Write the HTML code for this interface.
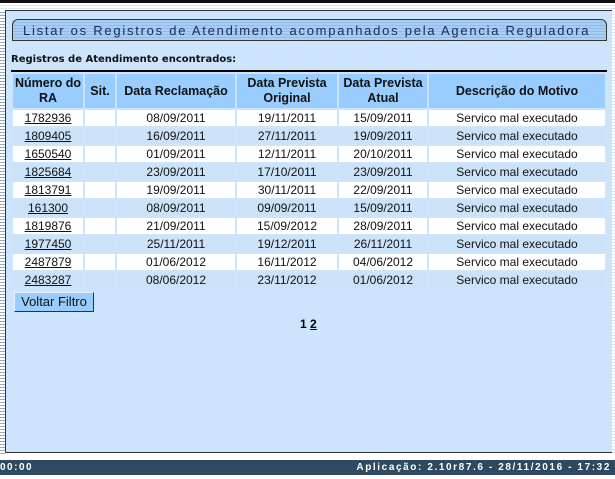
<!DOCTYPE html>
<html><head><style>
body{margin:0;width:615px;height:479px;overflow:hidden;background:#fff;font-family:"Liberation Sans",sans-serif;position:relative}
.topline{position:absolute;left:0;top:0;width:615px;height:3px;background:#111}
.stripes{position:absolute;left:0;top:3px;width:615px;height:452px;background:repeating-linear-gradient(#fff 0 2px,#dde8f3 2px 3px)}
.lstripe{position:absolute;left:0;top:10px;width:5px;height:445px;background:repeating-linear-gradient(#fff 0 2px,#9ab 2px 3px)}
.panel{position:absolute;left:5px;top:10px;width:606px;height:441px;background:#cce5fc;border:1px solid #333;border-right:none}
.title{position:absolute;left:12px;top:19px;width:595px;height:22px;border:1px solid #333;border-radius:6px 6px 0 0;background:repeating-linear-gradient(#a9cdf3 0 2px,#8fbbe8 2px 3px);font-size:13px;letter-spacing:1.75px;color:#1a2a55;line-height:22px;padding-left:10px;box-sizing:border-box;white-space:nowrap;overflow:hidden}
.sub{position:absolute;left:11px;top:54px;font-family:"DejaVu Sans",sans-serif;font-weight:bold;font-size:10px;color:#111}
table{position:absolute;left:11px;top:70px;width:596px;border-collapse:separate;border-spacing:2px;border-top:2px solid #000;background:#cce5fc;font-size:12px}
th{background:#99ccff;font-weight:bold;font-size:12.5px;color:#111;height:34px;line-height:15px;padding:0}
td{text-align:center;height:16px;padding:0;color:#111;line-height:16px}
tr.w td{background:#fff}tr.b td{background:#cce2f8}
td a{color:#111;text-decoration:underline}
.btn{position:absolute;left:14px;top:292px;width:78px;height:18px;background:#99ccff;border:1px solid #333;border-top-color:#eef;border-left-color:#eef;font-size:13px;text-align:center;line-height:18px;color:#111}
.pg{position:absolute;left:300px;top:317px;font-weight:bold;font-size:12px}
.foot{position:absolute;left:0;top:460px;width:615px;height:15px;background:#2f4a60;color:#fff;font-family:"Liberation Sans",sans-serif;font-weight:bold;font-size:10px;line-height:15px}
.foot span{position:absolute}
</style></head><body>
<div class="topline"></div><div class="stripes"></div><div class="lstripe"></div>
<div class="panel"></div>
<div class="title">Listar os Registros de Atendimento acompanhados pela Agencia Reguladora</div>
<div class="sub">Registros de Atendimento encontrados:</div>
<table>
<tr><th style="width:70px">Número do<br>RA</th><th style="width:30px">Sit.</th><th style="width:118px">Data Reclamação</th><th style="width:100px">Data Prevista<br>Original</th><th style="width:88px">Data Prevista<br>Atual</th><th>Descrição do Motivo</th></tr>
<tr class="w"><td><a>1782936</a></td><td></td><td>08/09/2011</td><td>19/11/2011</td><td>15/09/2011</td><td>Servico mal executado</td></tr>
<tr class="b"><td><a>1809405</a></td><td></td><td>16/09/2011</td><td>27/11/2011</td><td>19/09/2011</td><td>Servico mal executado</td></tr>
<tr class="w"><td><a>1650540</a></td><td></td><td>01/09/2011</td><td>12/11/2011</td><td>20/10/2011</td><td>Servico mal executado</td></tr>
<tr class="b"><td><a>1825684</a></td><td></td><td>23/09/2011</td><td>17/10/2011</td><td>23/09/2011</td><td>Servico mal executado</td></tr>
<tr class="w"><td><a>1813791</a></td><td></td><td>19/09/2011</td><td>30/11/2011</td><td>22/09/2011</td><td>Servico mal executado</td></tr>
<tr class="b"><td><a>161300</a></td><td></td><td>08/09/2011</td><td>09/09/2011</td><td>15/09/2011</td><td>Servico mal executado</td></tr>
<tr class="w"><td><a>1819876</a></td><td></td><td>21/09/2011</td><td>15/09/2012</td><td>28/09/2011</td><td>Servico mal executado</td></tr>
<tr class="b"><td><a>1977450</a></td><td></td><td>25/11/2011</td><td>19/12/2011</td><td>26/11/2011</td><td>Servico mal executado</td></tr>
<tr class="w"><td><a>2487879</a></td><td></td><td>01/06/2012</td><td>16/11/2012</td><td>04/06/2012</td><td>Servico mal executado</td></tr>
<tr class="b"><td><a>2483287</a></td><td></td><td>08/06/2012</td><td>23/11/2012</td><td>01/06/2012</td><td>Servico mal executado</td></tr>
</table>
<div class="btn">Voltar Filtro</div>
<div class="pg">1 <u>2</u></div>
<div class="foot"><span style="left:0;letter-spacing:1.5px">00:00</span><span style="right:4px;letter-spacing:1.6px">Aplicação: 2.10r87.6 - 28/11/2016 - 17:32</span></div>
</body></html>
